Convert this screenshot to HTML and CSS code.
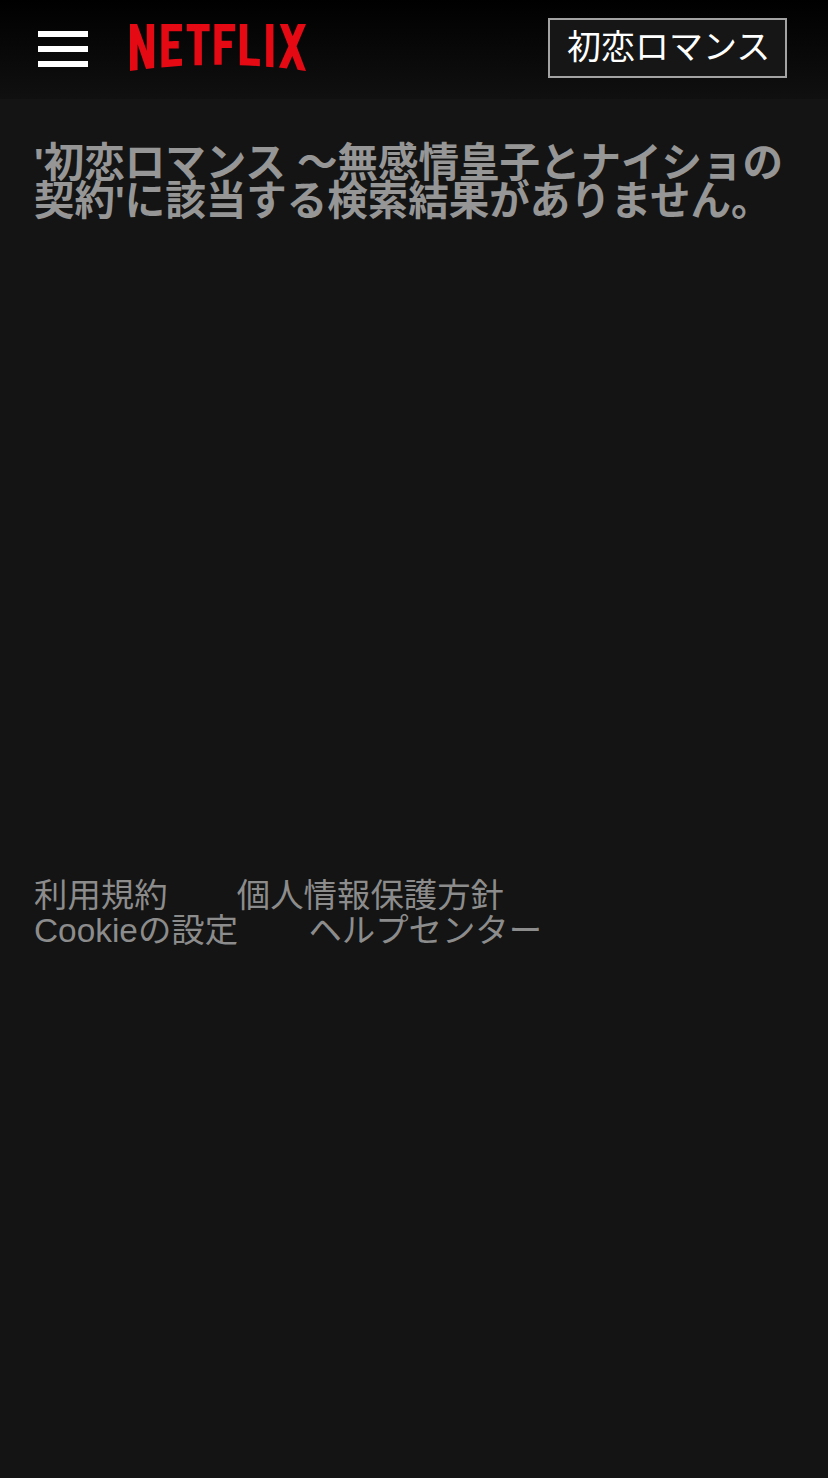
FILE: index.html
```html
<!DOCTYPE html>
<html lang="ja">
<head>
<meta charset="utf-8">
<title>Netflix</title>
<link rel="stylesheet" href="styles.css">
</head>
<body>
<header class="top">
  <button class="menu" aria-label="メニュー"><span></span><span></span><span></span></button>
  <svg class="logo" viewBox="0 0 111 30" preserveAspectRatio="none" role="img" aria-label="Netflix"><path d="M105.06 14.28 111 30c-1.75-.25-3.5-.56-5.28-.84l-3.35-8.69-3.43 7.97c-1.69-.28-3.35-.38-5.03-.6l6.03-13.75L94.47 0h5.06l3.06 7.87L105.87 0H111zM90.47 0h-4.6v27.25c1.5.09 3.07.16 4.6.34zm-8.57 26.94c-4.18-.28-8.37-.53-12.65-.63V0h4.69v21.87c2.69.07 5.37.29 7.96.41zM64.25 10.66v4.68h-6.41V26h-4.62V0h13.12v4.69h-8.5v5.97zM45.34 4.69v21.56c-1.56 0-3.15 0-4.68.06V4.69h-4.85V0h14.41v4.69zM30.75 15.59c-2.06 0-4.5 0-6.25.1v6.97c2.75-.19 5.5-.41 8.28-.5v4.5l-12.97 1.03V0h12.97v4.69H24.5V11c1.81 0 4.59-.1 6.25-.1zM4.78 12.97v16.37C3.09 29.53 1.59 29.75 0 30V0h4.47l6.09 17.03V0h4.69v28.06c-1.66.28-3.34.38-5.13.63z"/></svg>
  <div class="search">初恋ロマンス</div>
</header>
<main class="results">
  <h1 class="notice">'初恋ロマンス ～無感情皇子とナイショの契約'に該当する検索結果がありません。</h1>
</main>
<footer class="foot">
  <a class="link">利用規約</a>
  <a class="link">個人情報保護方針</a>
  <a class="link">Cookieの設定</a>
  <a class="link">ヘルプセンター</a>
</footer>
</body>
</html>
```
FILE: styles.css
```css
* { box-sizing: border-box; }
html, body { margin: 0; height: 100%; }
body {
  background: #141414;
  font-family: "Liberation Sans", "Noto Sans CJK JP", sans-serif;
  overflow: hidden;
}
.top {
  height: 99px;
  background: linear-gradient(to bottom, #000 0%, #101010 100%);
  display: flex;
  align-items: flex-start;
  padding: 0 41px 0 38px;
}
.menu {
  width: 50px;
  height: 36px;
  margin-top: 31px;
  padding: 0;
  border: 0;
  background: none;
  display: flex;
  flex-direction: column;
  justify-content: space-between;
}
.menu span { display: block; height: 6px; background: #fff; }
.logo {
  width: 176px;
  height: 47px;
  margin: 24px 0 0 42px;
  fill: #e50914;
}
.search {
  width: 239px;
  height: 60px;
  margin: 18px 0 0 auto;
  border: 2px solid #a3a3a3;
  background: #161616;
  color: #fff;
  font-size: 34px;
  line-height: 54px;
  padding-left: 17px;
  white-space: nowrap;
}
.results {
  height: 779px;
  padding: 45px 34px 0;
}
.notice {
  margin: 0;
  color: #969696;
  font-size: 40.5px;
  font-weight: 700;
  line-height: 38px;
}
.foot {
  width: 640px;
  padding-left: 34px;
  line-height: 35px;
  font-size: 33.4px;
  color: #8c8c8c;
}
.link { display: inline-block; margin-right: 60px; }
.link:nth-child(3) { margin-right: 61px; }
```
